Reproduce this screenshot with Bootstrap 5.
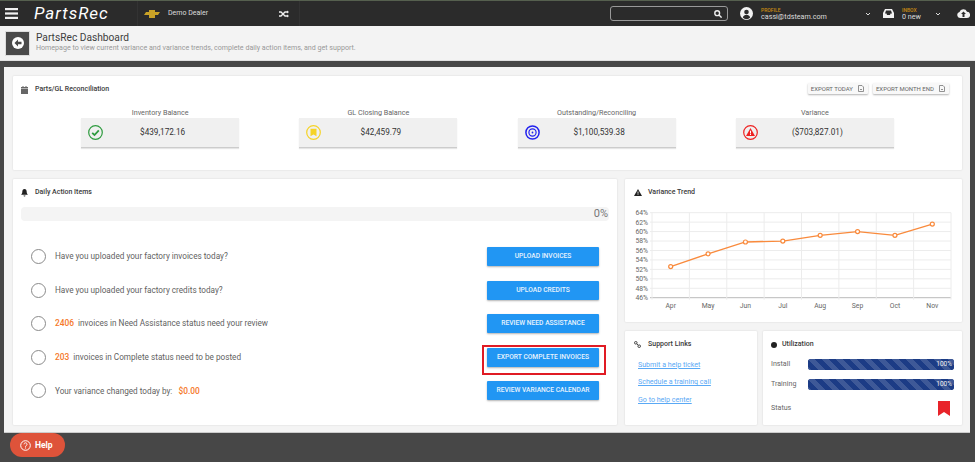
<!DOCTYPE html>
<html lang="en">
<head>
<meta charset="UTF-8">
<meta name="viewport" content="width=device-width, initial-scale=1.0">
<title>PartsRec Dashboard</title>
<link href="https://cdn.jsdelivr.net/npm/bootstrap@5.3.3/dist/css/bootstrap.min.css" rel="stylesheet">
<style>
html, body { height: 100%; }
body { background: #474747; font-family: Roboto, "Liberation Sans", sans-serif; color: #555; overflow: hidden; font-size: 8px; position: relative; }
svg { display: block; flex: none; }
.top-bar { height: 26px; background: #2b2b2b; border-top: 1px solid #56604f; padding: 0; flex-wrap: nowrap; justify-content: flex-start; color: #eee; }
.burger { width: 34px; padding-left: 5px; }
.logo-text { width: 103px; font-size: 17px; font-style: italic; font-weight: 400; letter-spacing: 1px; color: #fff; line-height: 1; padding-bottom: 1px; }
.dealer-box { width: 163px; height: 25px; border-left: 1px solid #333; border-right: 1px solid #333; padding: 0 6px; font-size: 7px; color: #ddd; }
.search-box { width: 118px; height: 15px; margin-left: 310px; border: 1px solid #999; border-radius: 3px; padding-right: 5px; }
.profile-box { width: 135px; margin-left: 12px; padding-right: 4px; }
.inbox-box { width: 72px; padding-left: 8px; padding-right: 6px; }
.cloud-icon { margin-left: 10px; }
.mini-label { font-size: 5px; color: #c98a12; line-height: 6px; font-weight: 500; }
.mini-value { font-size: 7.2px; color: #ddd; line-height: 8px; }
.title-bar { height: 35px; background: #f3f3f3; padding: 5px; border-bottom: 1px solid #e0e0e0; }
.back-btn { width: 25px; height: 25px; background: #4a4a4a; border: 1px solid #ddd; border-radius: 0; padding: 0; margin-right: 6px; }
.page-title { font-size: 10.2px; color: #3d3d3d; line-height: 11px; font-weight: 400; margin: 0; }
.page-sub { font-size: 7.1px; color: #999; line-height: 9px; }
.title-text { margin-bottom: 3px; }
.main-panel { width: 966px; height: 366px; margin: 6px 0 0 4px; background: #f4f4f4; padding: 9px 8px 8px 9px; border-bottom: 1px solid #ccc; }
.panel-card { border: 0; border-radius: 1px; box-shadow: 0 0 2px rgba(0,0,0,.14); }
.recon-card { height: 94px; padding: 7px 8px 0 8px; }
.recon-head { padding-right: 5px; height: 11px; }
.card-head { font-size: 7px; font-weight: 500; color: #3a3a3a; line-height: 11px; height: 12px; padding-top: 1px; margin-bottom: -1px; }
.head-icon { width: 14px; }
.export-btn { height: 11px; padding: 0 4px 0 3px; gap: 5px; font-size: 6px; line-height: 11px; color: #666; background: #f8f8f8; border: 0; border-radius: 1px; box-shadow: 0 1px 2px rgba(0,0,0,.3); white-space: nowrap; }
.export-gap { gap: 5px; }
.balance-row { padding: 0 30px; margin-top: 13px; }
.balance-label { font-size: 7.2px; color: #666; line-height: 11px; }
.balance-box { width: 158px; height: 30px; background: #f0f0f0; border-bottom: 1px solid #ccc; box-shadow: 0 1px 1px rgba(0,0,0,.1); padding: 0 7px; font-size: 8.2px; color: #333; position: relative; }
.balance-box span { flex: 1; text-align: center; padding-right: 10px; }
.lower-row { height: 246px; margin-top: 9px; gap: 8px; }
.actions-card { width: 604px; height: 246px; padding: 7px 8px; }
.side-col { width: 337px; gap: 9px; }
.trend-card { height: 143px; padding: 7px 9px 0 9px; }
.support-card { width: 132px; height: 94px; padding: 7px 9px; }
.util-card { width: 199px; height: 94px; padding: 7px 8px 0 8px; }
.util-card .head-icon { width: 11px; }
.daily-bar { height: 14px; margin-top: 10px; background: #f4f4f4; border-radius: 4px; font-size: 11px; color: #777; padding-right: 1px; line-height: 14px; }
.action-list { margin-top: 26px; gap: 14.6px; }
.action-row { height: 19px; padding: 0 10px 0 10px; }
.tick-ring { width: 15px; height: 15px; border: 1.3px solid #8a8a8a; border-radius: 50%; margin-right: 9px; flex: none; }
.action-text { font-size: 8.2px; color: #5f5f5f; flex: 1; white-space: nowrap; }
.hot-num { color: #f5782a; font-weight: 500; margin-right: 2px; font-size: 8.4px; }
.action-btn { width: 112px; height: 19px; padding: 0; font-size: 6.7px; font-weight: 500; line-height: 19px; background: #2196f3; border: 0; color: #e8f3fd; border-radius: 1px; box-shadow: 0 1px 2px rgba(0,0,0,.3); position: relative; white-space: nowrap; }
.red-frame { position: absolute; left: -5px; top: -3px; width: 124px; height: 30px; border: 2px solid #e01b24; }
.help-links a { font-size: 7.1px; color: #5aa9f5; line-height: 9px; margin-left: 4px; }
.help-links { gap: 8.7px; margin-top: 10.7px; }
.util-label { width: 37px; font-size: 7.1px; color: #666; flex: none; }
.util-row { height: 11px; margin-top: 9.5px; }
.util-track { height: 11px; flex: 1; border-radius: 3px; background: #1c3c85; font-size: 6.5px; }
.util-fill { display: block; background-color: #1c3c85; width: 100%; line-height: 11px; text-align: right; padding-right: 2px; color: #eee; background-size: 14px 14px; }
.status-row { margin-top: 10px; height: 16px; padding-right: 4px; }
.help-btn { position: absolute; left: 10px; top: 433px; width: 55px; height: 24px; background: #de533a; border: 0; border-radius: 12px; color: #fff; font-size: 8.5px; font-weight: 700; padding: 0 0 0 10px; gap: 4px; }
.chart-box { margin: 8px 0 0 -4px; }
.chart-box text { font-family: Roboto, "Liberation Sans", sans-serif; font-size: 6.8px; fill: #666; }
</style>
</head>
<body>
<nav class="navbar top-bar align-items-center">
  <div class="burger">
    <svg width="13" height="11" viewBox="0 0 13 11" fill="#f0f0f0"><rect width="13" height="2.2" y="0"/><rect width="13" height="2.2" y="4.4"/><rect width="13" height="2.2" y="8.8"/></svg>
  </div>
  <div class="logo-text">PartsRec</div>
  <div class="dealer-box d-flex align-items-center">
    <svg width="16" height="8" viewBox="0 0 16 8" class="me-2"><path d="M5 0h6v2h5l-2 3h-3v3H5V5H0l2-3h3z" fill="#c9a227"/></svg>
    <span class="flex-grow-1">Demo Dealer</span>
    <svg width="10" height="8" viewBox="0 0 10 8" fill="none" stroke="#eee" stroke-width="1.3" class="me-1"><path d="M0 2h2l4 4h2M0 6h2l4-4h2"/><path d="M8 .5 10 2 8 3.500zM8 4.500 10 6 8 7.500z" fill="#eee" stroke="none"/></svg>
  </div>
  <div class="search-box d-flex align-items-center justify-content-end">
    <svg width="8" height="8" viewBox="0 0 8 8" fill="none" stroke="#eee" stroke-width="1.4"><circle cx="3.200" cy="3.200" r="2.400"/><path d="m5 5 2.600 2.600"/></svg>
  </div>
  <div class="profile-box d-flex align-items-center">
    <svg width="13" height="13" viewBox="0 0 13 13" class="me-2"><circle cx="6.500" cy="6.500" r="6.500" fill="#f2f2f2"/><circle cx="6.500" cy="5" r="2.300" fill="#2b2b2b"/><path d="M2.800 10.600c.6-2 2-2.800 3.700-2.800s3.100.8 3.700 2.800a5 5 0 0 1-7.400 0z" fill="#2b2b2b"/></svg>
    <div class="flex-grow-1"><div class="mini-label">PROFILE</div><div class="mini-value">cassi@tdsteam.com</div></div>
    <svg width="6" height="4" viewBox="0 0 6 4" fill="none" stroke="#ddd" stroke-width="1"><path d="m1 1 2 2 2-2"/></svg>
  </div>
  <div class="inbox-box d-flex align-items-center">
    <svg width="11" height="9" viewBox="0 0 11 9" class="me-2"><path d="M2 0h7l2 4v5H0V4z" fill="#f2f2f2"/><path d="M3 1.500h5l1 3H7.500L7 6H4l-.5-1.500H2z" fill="#2b2b2b"/></svg>
    <div class="flex-grow-1"><div class="mini-label">INBOX</div><div class="mini-value">0 new</div></div>
    <svg width="6" height="4" viewBox="0 0 6 4" fill="none" stroke="#ddd" stroke-width="1"><path d="m1 1 2 2 2-2"/></svg>
  </div>
  <svg width="13" height="9" viewBox="0 0 13 9" class="cloud-icon"><path d="M3 9a3 3 0 0 1-.5-5.900A4 4 0 0 1 10 2.800 3.100 3.100 0 0 1 10 9z" fill="#f2f2f2"/><path d="M6.500 2.500 9 5H7.500v3h-2V5H4z" fill="#2b2b2b"/></svg>
</nav>

<div class="title-bar d-flex align-items-center">
  <button class="btn back-btn d-flex align-items-center justify-content-center" type="button" aria-label="Back">
    <svg width="12" height="12" viewBox="0 0 12 12"><circle cx="6" cy="6" r="6" fill="#fff"/><path d="M6 2.500 2.500 6 6 9.500V7.200h3.500V4.800H6z" fill="#4a4a4a"/></svg>
  </button>
  <div class="title-text">
    <h1 class="page-title">PartsRec Dashboard</h1>
    <div class="page-sub">Homepage to view current variance and variance trends, complete daily action items, and get support.</div>
  </div>
</div>

<main class="main-panel">
  <section class="card panel-card recon-card">
    <div class="d-flex justify-content-between align-items-start recon-head">
      <div class="card-head d-flex align-items-center">
        <div class="head-icon"><svg width="7" height="8" viewBox="0 0 7 8" fill="#666"><path d="M0 1h1.500V0h1v1h2V0h1v1H7v1.500H0zM0 3h7v5H0z"/></svg></div>
        Parts/GL Reconciliation
      </div>
      <div class="d-flex export-gap">
        <button class="btn export-btn d-flex align-items-center" type="button">EXPORT TODAY
          <svg width="6" height="7" viewBox="0 0 6 7" fill="none" stroke="#777" stroke-width=".8"><path d="M.5.500H4L5.500 2v4.500h-5zM2 4.500h2"/></svg></button>
        <button class="btn export-btn d-flex align-items-center" type="button">EXPORT MONTH END
          <svg width="6" height="7" viewBox="0 0 6 7" fill="none" stroke="#777" stroke-width=".8"><path d="M.5.500H4L5.500 2v4.500h-5zM2 4.500h2"/></svg></button>
      </div>
    </div>
    <div class="row g-0 balance-row">
      <div class="col-3 d-flex flex-column align-items-center">
        <div class="balance-label">Inventory Balance</div>
        <div class="balance-box d-flex align-items-center">
          <svg width="15" height="15" viewBox="0 0 15 15" fill="none" stroke="#2e9b3f"><circle cx="7.500" cy="7.500" r="6.800" stroke-width="1.200"/><path d="m4.200 7.800 2.300 2.200 4.300-4.600" stroke-width="1.800"/></svg>
          <span>$439,172.16</span>
        </div>
      </div>
      <div class="col-3 d-flex flex-column align-items-center">
        <div class="balance-label">GL Closing Balance</div>
        <div class="balance-box d-flex align-items-center">
          <svg width="15" height="15" viewBox="0 0 15 15"><circle cx="7.500" cy="7.500" r="6.800" fill="none" stroke="#f5d327" stroke-width="1.200"/><path d="M4.500 3.800h6v7.400l-3-1.800-3 1.800z" fill="#f5d327"/></svg>
          <span>$42,459.79</span>
        </div>
      </div>
      <div class="col-3 d-flex flex-column align-items-center">
        <div class="balance-label">Outstanding/Reconciling</div>
        <div class="balance-box d-flex align-items-center">
          <svg width="15" height="15" viewBox="0 0 15 15" fill="none" stroke="#2222ee"><circle cx="7.500" cy="7.500" r="6.600" stroke-width="1.500"/><circle cx="7.500" cy="7.500" r="3.600" stroke-width="1.200"/><circle cx="7.500" cy="7.500" r=".9" fill="#2222ee" stroke="none"/></svg>
          <span>$1,100,539.38</span>
        </div>
      </div>
      <div class="col-3 d-flex flex-column align-items-center">
        <div class="balance-label">Variance</div>
        <div class="balance-box d-flex align-items-center">
          <svg width="15" height="15" viewBox="0 0 15 15"><circle cx="7.500" cy="7.500" r="6.800" fill="none" stroke="#ee2222" stroke-width="1.200"/><path d="M7.500 3 12 11H3z" fill="#ee2222"/><path d="M7 5.800h1v2.700H7zM7 9h1v1H7z" fill="#fff"/></svg>
          <span>($703,827.01)</span>
        </div>
      </div>
    </div>
  </section>

  <div class="d-flex lower-row">
    <section class="card panel-card actions-card">
      <div class="card-head d-flex align-items-center">
        <div class="head-icon"><svg width="7" height="8" viewBox="0 0 7 8" fill="#222"><path d="M3.500 0C5 0 5.700 1.200 5.700 2.800c0 1.500.5 2.300 1.300 3H0c.8-.7 1.300-1.500 1.300-3C1.300 1.200 2 0 3.500 0zM2.500 6.500h2a1 1 0 0 1-2 0z"/></svg></div>
        Daily Action Items
      </div>
      <div class="daily-bar text-end">0%</div>
      <div class="action-list d-flex flex-column">
        <div class="action-row d-flex align-items-center">
          <div class="tick-ring"></div>
          <div class="action-text">Have you uploaded your factory invoices today?</div>
          <button class="btn action-btn" type="button">UPLOAD INVOICES</button>
        </div>
        <div class="action-row d-flex align-items-center">
          <div class="tick-ring"></div>
          <div class="action-text">Have you uploaded your factory credits today?</div>
          <button class="btn action-btn" type="button">UPLOAD CREDITS</button>
        </div>
        <div class="action-row d-flex align-items-center">
          <div class="tick-ring"></div>
          <div class="action-text"><span class="hot-num">2406</span> invoices in Need Assistance status need your review</div>
          <button class="btn action-btn" type="button">REVIEW NEED ASSISTANCE</button>
        </div>
        <div class="action-row d-flex align-items-center">
          <div class="tick-ring"></div>
          <div class="action-text"><span class="hot-num">203</span> invoices in Complete status need to be posted</div>
          <button class="btn action-btn" type="button">EXPORT COMPLETE INVOICES<span class="red-frame"></span></button>
        </div>
        <div class="action-row d-flex align-items-center">
          <div class="tick-ring"></div>
          <div class="action-text">Your variance changed today by: <span class="hot-num ms-1">$0.00</span></div>
          <button class="btn action-btn" type="button">REVIEW VARIANCE CALENDAR</button>
        </div>
      </div>
    </section>

    <div class="side-col d-flex flex-column">
      <section class="card panel-card trend-card">
        <div class="card-head d-flex align-items-center">
          <div class="head-icon"><svg width="8" height="7" viewBox="0 0 8 7"><path d="M4 0l4 7H0z" fill="#222"/><path d="M3.600 2.500h.8v2.200h-.8zM3.600 5.200h.8V6h-.8z" fill="#fff"/></svg></div>
          Variance Trend
        </div>
        <div class="chart-box"><svg id="trendChart" width="327" height="105" viewBox="0 0 327 105"></svg></div>
      </section>
      <div class="d-flex justify-content-between">
        <section class="card panel-card support-card">
          <div class="card-head d-flex align-items-center">
            <div class="head-icon"><svg width="7" height="7" viewBox="0 0 7 7" fill="none" stroke="#444" stroke-width="1"><circle cx="1.800" cy="1.800" r="1.300"/><circle cx="5.200" cy="5.200" r="1.300"/><path d="m2.800 2.800 1.400 1.400"/></svg></div>
            Support Links
          </div>
          <div class="help-links d-flex flex-column align-items-start">
            <a href="#">Submit a help ticket</a>
            <a href="#">Schedule a training call</a>
            <a href="#">Go to help center</a>
          </div>
        </section>
        <section class="card panel-card util-card">
          <div class="card-head d-flex align-items-center">
            <div class="head-icon"><svg width="6" height="6" viewBox="0 0 6 6"><circle cx="3" cy="3" r="3" fill="#222"/></svg></div>
            Utilization
          </div>
          <div class="util-row d-flex align-items-center">
            <div class="util-label">Install</div>
            <div class="progress util-track"><div class="progress-bar progress-bar-striped util-fill">100%</div></div>
          </div>
          <div class="util-row d-flex align-items-center">
            <div class="util-label">Training</div>
            <div class="progress util-track"><div class="progress-bar progress-bar-striped util-fill">100%</div></div>
          </div>
          <div class="status-row d-flex align-items-center justify-content-between">
            <div class="util-label">Status</div>
            <svg width="12" height="15" viewBox="0 0 12 15"><path d="M0 0h12v15l-6-4-6 4z" fill="#e8232a"/></svg>
          </div>
        </section>
      </div>
    </div>
  </div>
</main>

<button class="btn help-btn d-flex align-items-center" type="button">
  <svg width="11" height="11" viewBox="0 0 11 11" fill="none" stroke="#fff"><circle cx="5.500" cy="5.500" r="4.800"/><path d="M4 4.300a1.500 1.500 0 1 1 2.300 1.300c-.6.400-.8.600-.8 1.200"/><path d="M5.500 7.500v1"/></svg>
  Help
</button>

<script src="https://cdn.jsdelivr.net/npm/bootstrap@5.3.3/dist/js/bootstrap.bundle.min.js"></script>
<script>
  // variance trend chart, drawn from the monthly values
  const months = ['Apr', 'May', 'Jun', 'Jul', 'Aug', 'Sep', 'Oct', 'Nov'];
  const values = [52.6, 55.3, 57.8, 58, 59.2, 60, 59.2, 61.6];
  const left = 22, right = 321, top_ = 7.7, bottom = 92.7;
  const stepX = (right - left) / months.length;
  const toY = v => bottom - (v - 46) / 18 * (bottom - top_);
  let out = '';
  for (let p = 46; p <= 64; p += 2) {
    const y = toY(p);
    out += `<line x1="${left - 2}" x2="${right}" y1="${y}" y2="${y}" stroke="${p === 46 ? '#bbb' : '#ececec'}"/>`;
    out += `<text x="${left - 4}" y="${y + 2.4}" text-anchor="end">${p}%</text>`;
  }
  months.forEach((m, i) => {
    const x = left + stepX * i;
    out += `<line x1="${x}" x2="${x}" y1="${top_}" y2="${bottom + 2}" stroke="#ececec"/>`;
    out += `<text x="${x + stepX / 2}" y="${bottom + 10}" text-anchor="middle">${m}</text>`;
  });
  out += `<line x1="${right}" x2="${right}" y1="${top_}" y2="${bottom + 2}" stroke="#ececec"/>`;
  const pts = values.map((v, i) => [left + stepX * (i + 0.5), toY(v)]);
  out += `<polyline points="${pts.map(p => p.join(',')).join(' ')}" fill="none" stroke="#f98a3c" stroke-width="1.300"/>`;
  pts.forEach(p => { out += `<circle cx="${p[0]}" cy="${p[1]}" r="2" fill="#fff" stroke="#f98a3c" stroke-width="1.200"/>`; });
  document.getElementById('trendChart').innerHTML = out;
</script>
</body>
</html>
